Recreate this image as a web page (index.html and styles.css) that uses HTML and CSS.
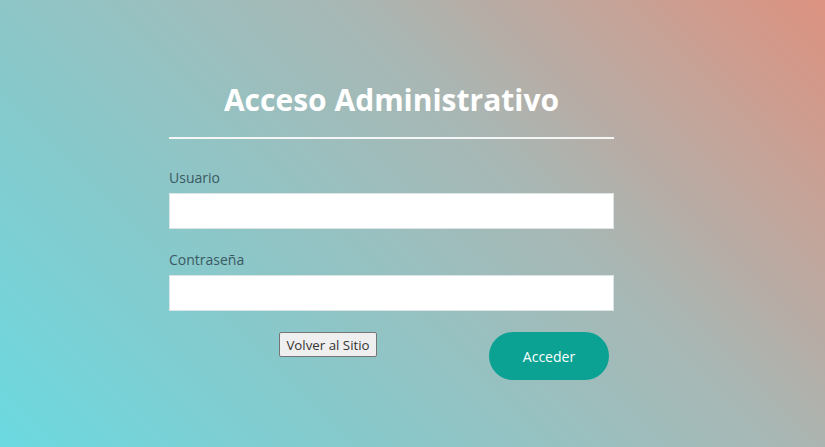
FILE: index.html
```html
<!DOCTYPE html>
<html lang="es">
<head>
<meta charset="utf-8">
<title>Acceso Administrativo</title>
<link rel="stylesheet" href="styles.css">
</head>
<body>
<main class="page">
  <form class="login">
    <h1 class="title">Acceso Administrativo</h1>
    <hr class="rule">
    <label class="label" for="u">Usuario</label>
    <input class="field" id="u" type="text">
    <label class="label" for="p">Contraseña</label>
    <input class="field" id="p" type="password">
    <div class="actions">
      <button type="button" class="back">Volver al Sitio</button>
      <button type="submit" class="submit">Acceder</button>
    </div>
  </form>
</main>
</body>
</html>
```
FILE: styles.css
```css
html, body {
  margin: 0;
  height: 100%;
}
body {
  background: linear-gradient(45deg, #6bd9e0 0%, #a8b7b4 62%, #dd9280 100%);
  font-family: "Open Sans", "Liberation Sans", sans-serif;
}
.page {
  display: flex;
  justify-content: center;
  padding-top: 80px;
}
.login {
  width: 445px;
  margin-left: -42px;
  display: flex;
  flex-direction: column;
}
.title {
  margin: 0;
  text-align: center;
  color: #fff;
  font-size: 30px;
  font-weight: 700;
  line-height: 40px;
}
.rule {
  margin: 17px 0 0;
  border: 0;
  height: 2px;
  background: #f4f6f6;
}
.label {
  margin-top: 29px;
  font-size: 14px;
  line-height: 20px;
  color: #3b5962;
}
.field {
  margin-top: 5px;
  height: 36px;
  box-sizing: border-box;
  border: 1px solid #dde4e6;
  background: #fff;
  padding: 0 8px;
  outline: none;
}
.field + .label {
  margin-top: 21px;
}
.actions {
  display: flex;
  align-items: flex-start;
  justify-content: space-between;
  padding: 0 5px 0 110px;
  margin-top: 21px;
}
.back {
  height: 25px;
  width: 98px;
  padding: 0;
  font-family: "Open Sans", "Liberation Sans", sans-serif;
  font-size: 13.3px;
  color: #333;
  background: #efefef;
  border: 1px solid #767676;
  border-radius: 2px;
}
.submit {
  width: 120px;
  height: 48px;
  border: 0;
  border-radius: 24px;
  background: #0ba293;
  color: #fff;
  font-family: "Open Sans", "Liberation Sans", sans-serif;
  font-size: 14px;
}
```
